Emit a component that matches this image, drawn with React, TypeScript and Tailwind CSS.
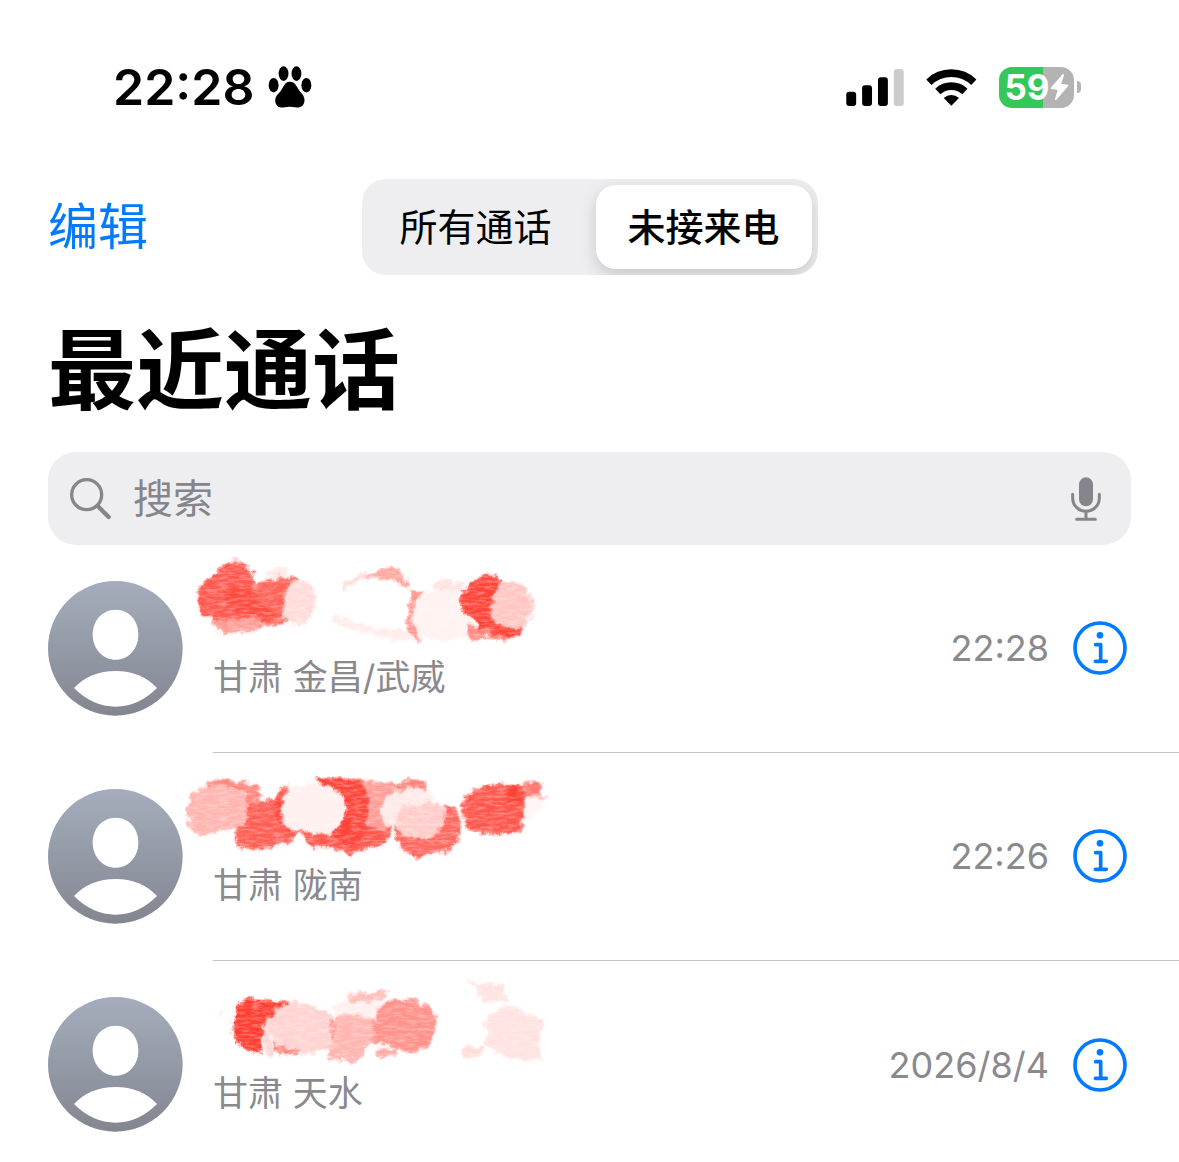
import React, { useState } from "react";

interface Blob {
	d: string;
	fill: string;
	opacity?: number;
}

interface Call {
	id: number;
	place: string;
	time: string;
	viewBox: string;
	blobs: Blob[];
}

const calls: Call[] = [
	{
		id: 1,
		place: "甘肃 金昌/武威",
		time: "22:28",
		viewBox: "423 12 1110 288",
		blobs: [
			{ d: "M505 185L530 240Q560 258 590 245Q640 252 680 225L740 215L650 170Z", fill: "#ff9d96" },
			{ d: "M675 80Q700 50 735 52Q750 65 745 85Z", fill: "#ffe9e7" },
			{ d: "M645 115Q665 82 700 86Q745 72 778 95L740 130L735 220Q690 238 645 200Z", fill: "#ff6359" },
			{ d: "M470 140Q475 95 515 88Q530 50 560 42Q585 20 607 42Q637 52 642 85L650 115L650 195Q610 215 570 203Q535 225 512 208Q478 185 470 140Z", fill: "#ff5a50" },
			{ d: "M545 120Q600 100 640 130L720 205Q680 225 640 195Q570 200 545 120Z", fill: "#ff4337", opacity: 0.6 },
			{ d: "M735 130Q745 92 785 90Q825 105 827 150Q825 200 795 222Q755 232 726 205Z", fill: "#ffdcd9" },
			{ d: "M875 205Q900 190 925 205Q985 240 1060 235Q1110 245 1130 270Q1060 278 1010 252Q950 248 880 222Z", fill: "#ffeceb" },
			{ d: "M905 130Q900 95 950 78Q990 65 1050 75L1050 90Q960 75 925 112Z", fill: "#ffdedb" },
			{ d: "M975 72Q1020 65 1050 50Q1090 55 1092 85Q1112 95 1108 120Q1070 80 975 77Z", fill: "#ffa7a1" },
			{ d: "M1180 100Q1215 75 1245 100Q1270 90 1280 120L1190 130Z", fill: "#ffe3e1" },
			{ d: "M1115 120L1152 122Q1120 165 1122 210L1142 272Q1120 270 1100 235Z", fill: "#ff958e" },
			{ d: "M1125 165Q1150 125 1200 120Q1270 110 1285 160L1300 250Q1220 285 1145 262Q1105 220 1125 165Z", fill: "#fff2f1" },
			{ d: "M1285 225L1390 230L1425 250L1400 272L1330 260L1290 275Z", fill: "#ff8880" },
			{ d: "M1262 150Q1278 88 1325 78Q1365 72 1385 92L1365 140L1375 215L1450 228Q1440 262 1400 262Q1360 245 1315 238L1310 215Q1268 200 1262 150Z", fill: "#ff4539" },
			{ d: "M1375 105Q1400 85 1440 98Q1478 120 1480 170Q1475 215 1435 235Q1390 240 1365 210Q1340 180 1360 148Z", fill: "#ffc6c2" },
		],
	},
	{
		id: 2,
		place: "甘肃 陇南",
		time: "22:26",
		viewBox: "423 -9 1110 288",
		blobs: [
			{ d: "M495 55Q550 32 590 50Q640 45 662 85L660 120L600 130Z", fill: "#ff8780" },
			{ d: "M440 130Q445 85 490 65Q560 50 605 80L635 130L605 195Q570 180 545 195Q510 220 470 210Q440 190 440 130Z", fill: "#ffb5b0" },
			{ d: "M622 130Q650 95 705 108Q715 70 745 60L780 200Q750 240 700 245Q640 258 592 245L585 195Q620 180 622 130Z", fill: "#ff5e54" },
			{ d: "M705 120L745 62L760 200L720 190Z", fill: "#ff493e" },
			{ d: "M775 190L860 190L1055 190Q1050 235 985 250Q950 250 928 270Q900 268 885 245L810 248Z", fill: "#ff594f" },
			{ d: "M825 38Q890 45 945 38Q985 45 988 90L985 190Q960 240 930 242Q875 235 880 200L900 130Z", fill: "#ff453a" },
			{ d: "M965 42Q1010 55 1060 52L1100 100L1055 190Q1010 200 975 185Q1000 100 965 42Z", fill: "#ff9d97" },
			{ d: "M725 105Q735 70 775 60Q845 42 895 78Q920 95 918 140Q900 200 860 210Q815 210 785 195Q735 195 725 165Z", fill: "#fff0ef" },
			{ d: "M1065 60Q1100 50 1120 38Q1162 38 1165 80L1180 110L1090 90Z", fill: "#ff8078" },
			{ d: "M1065 190L1170 190L1210 120Q1250 115 1260 150Q1270 205 1238 250Q1200 268 1170 262Q1130 290 1100 265Q1065 240 1065 190Z", fill: "#ff685f" },
			{ d: "M1022 140Q1025 95 1075 75Q1130 55 1172 85L1190 140L1070 190Q1025 185 1022 140Z", fill: "#ffeae8" },
			{ d: "M1070 155Q1085 115 1130 122Q1180 105 1215 125L1212 175L1190 210Q1150 230 1105 212Q1072 205 1070 155Z", fill: "#ffccc9" },
			{ d: "M1460 95L1505 90L1520 105L1480 160L1455 165Z", fill: "#fff5f4" },
			{ d: "M1267 120Q1275 75 1325 65Q1390 50 1450 65L1458 130L1440 200Q1360 215 1285 195L1272 160Z", fill: "#ff574c" },
			{ d: "M1395 80Q1410 55 1440 60L1465 80L1435 120L1400 125Z", fill: "#ff4236" },
			{ d: "M1438 60Q1470 45 1500 55L1505 90L1485 98L1460 92Z", fill: "#ff7970" },
			{ d: "M1475 92L1500 84L1524 102L1500 110Z", fill: "#ffc4c0" },
		],
	},
	{
		id: 3,
		place: "甘肃 天水",
		time: "2026/8/4",
		viewBox: "423 0 1110 288",
		blobs: [
			{ d: "M530 130L550 118L535 140Z", fill: "#ffe6e4" },
			{ d: "M580 150Q590 90 630 85Q690 90 748 92L740 125Q700 120 680 150L662 200L670 245Q620 250 590 215Q575 190 580 150Z", fill: "#ff3d31" },
			{ d: "M668 195L690 140L710 130L690 200L705 250L680 260Z", fill: "#ffd6d3" },
			{ d: "M870 105Q940 85 1030 92L1000 150L890 130Z", fill: "#fff0ef" },
			{ d: "M918 75Q980 70 1020 62L1052 66L1020 90L930 98Z", fill: "#ffbeb9" },
			{ d: "M865 150Q910 125 960 135L1000 150L1002 220Q975 235 955 275Q900 280 860 262Z", fill: "#ffb5b0" },
			{ d: "M700 215Q740 235 790 240L765 255L710 248Z", fill: "#ff8077" },
			{ d: "M690 145Q720 92 770 98Q850 105 880 140L882 215Q850 250 800 252Q760 235 715 228Q685 195 690 145Z", fill: "#ffd3d0" },
			{ d: "M874 140L885 160L882 215L874 205Z", fill: "#ff8a82" },
			{ d: "M1008 235L1080 238L1045 264L1012 255Z", fill: "#ffa8a2" },
			{ d: "M998 160Q1010 105 1060 88Q1120 80 1170 115Q1195 140 1188 165Q1185 220 1130 248Q1080 250 1050 225L1000 218Z", fill: "#ff928b" },
			{ d: "M1285 32Q1330 45 1385 42L1405 92L1330 95L1310 55Z", fill: "#ffe3e1" },
			{ d: "M1258 248L1290 228L1335 230L1325 248L1280 264Z", fill: "#ffdcd9" },
			{ d: "M1338 155Q1360 115 1410 108Q1450 120 1500 145Q1515 175 1495 215L1510 270Q1440 280 1370 245L1335 225Z", fill: "#ffe3e1" },
		],
	},
];

function Paw() {
	return (
		<svg viewBox="503 51 131 127" className="h-[42px] w-11" aria-hidden="true">
			<ellipse cx="519" cy="109" rx="15" ry="22" />
			<ellipse cx="549" cy="74" rx="15" ry="22" />
			<ellipse cx="588" cy="74" rx="15" ry="22" />
			<ellipse cx="618" cy="109" rx="15" ry="22" />
			<path d="M568 99C585 99 588 114 598 127C608 137 614 146 612 158C610 173 596 179 584 176Q568 172 552 176C540 179 526 174 524 158C522 146 530 137 540 127C550 114 552 99 568 99Z" />
		</svg>
	);
}

function Signal() {
	return (
		<svg viewBox="48 56 174 112" className="h-[37px] w-[58px]" aria-hidden="true">
			<rect x="48" y="125" width="30" height="43" rx="9" />
			<rect x="96" y="105" width="30" height="63" rx="9" />
			<rect x="144" y="81" width="30" height="87" rx="9" />
			<rect x="192" y="56" width="30" height="112" rx="9" fill="#cccccc" />
		</svg>
	);
}

function Wifi() {
	return (
		<svg viewBox="288 56 153 112" className="h-[37px] w-[51px]" aria-hidden="true">
			<path d="M296 96A98 98 0 0 1 432 96" fill="none" stroke="#000" strokeWidth="23" />
			<path d="M323 124A60 60 0 0 1 405 124" fill="none" stroke="#000" strokeWidth="23" />
			<path d="M341 144A34 34 0 0 1 387 144L364 167Z" />
		</svg>
	);
}

function Battery() {
	return (
		<div className="flex items-center gap-[3px]">
			<div className="flex h-[41px] w-[75px] items-center justify-center rounded-[13px] bg-[linear-gradient(to_right,#34c759_59%,#b3b3b3_59%)] text-white">
				<span className="text-[35px] leading-none font-bold">59</span>
				<svg viewBox="664 74 56 83" className="h-7 w-[19px]" aria-hidden="true">
					<path d="M703 79L668 119L690 122L681 152L716 111L694 108Z" fill="#fff" stroke="#fff" strokeWidth="5" strokeLinejoin="round" />
				</svg>
			</div>
			<div className="h-3 w-1 rounded-r-full bg-[#b3b3b3]"></div>
		</div>
	);
}

function Avatar() {
	return (
		<svg viewBox="24 93 405 405" className="h-[135px] w-[135px] shrink-0" aria-hidden="true">
			<circle cx="226" cy="295" r="202" fill="url(#avatar)" />
			<path d="M227 179C268 179 295 212 295 254C295 298 264 329 227 329C190 329 158 298 158 254C158 212 186 179 227 179Z" fill="#fff" />
			<path d="M102 414Q150 363 227 363Q303 363 351 414Q295 470 227 470Q158 470 102 414Z" fill="#fff" />
		</svg>
	);
}

function InfoIcon() {
	return (
		<svg viewBox="578 63 162 162" className="h-[54px] w-[54px]" fill="none" stroke="#007aff" strokeWidth="11" aria-hidden="true">
			<circle cx="659" cy="144" r="75" />
			<circle cx="659" cy="106" r="10" fill="#007aff" stroke="none" />
			<path d="M646 134H661V184M645 184H678" strokeLinecap="round" strokeLinejoin="round" />
		</svg>
	);
}

function CallRow({ call, last }: { call: Call; last: boolean }) {
	return (
		<li className="flex h-[208px] gap-[30px] pl-12">
			<div className="flex items-center pb-0.5">
				<Avatar />
			</div>
			<div className={`flex min-w-0 flex-1 items-center gap-6 pr-[52px] pb-px ${last ? "" : "border-b border-[#c6c6c8]"}`}>
				<div className="flex flex-1 flex-col self-start pt-[9px]">
					<svg viewBox={call.viewBox} className="-ml-8 h-24 w-[370px] overflow-visible" aria-hidden="true">
						<g filter="url(#rough)">
							{call.blobs.map((blob, i) => (
								<path key={i} d={blob.d} fill={blob.fill} opacity={blob.opacity} />
							))}
						</g>
					</svg>
					<p className="text-[35px] leading-[54px] whitespace-nowrap">{call.place}</p>
				</div>
				<time className="text-4xl whitespace-nowrap">{call.time}</time>
				<button type="button" aria-label="详细信息">
					<InfoIcon />
				</button>
			</div>
		</li>
	);
}

function App() {
	const [tab, setTab] = useState("missed");

	const activeTab = "h-[84px] w-[216px] rounded-[20px] bg-white font-medium shadow-[0_6px_16px_rgba(0,0,0,0.16)]";
	const plainTab = "h-[84px] w-[216px] rounded-[20px]";

	return (
		<div className="min-h-screen overflow-hidden bg-white font-['Inter','Noto_Sans_CJK_SC',sans-serif] text-black">
			<svg className="absolute h-0 w-0" aria-hidden="true">
				<defs>
					<linearGradient id="avatar" x1="0" y1="0" x2="0" y2="1">
						<stop offset="0" stopColor="#a5adbc" />
						<stop offset="1" stopColor="#828690" />
					</linearGradient>
					{/* torn edges and a bit of paper grain for the brush marks */}
					<filter id="rough" x="-5%" y="-10%" width="110%" height="120%" colorInterpolationFilters="sRGB">
						<feTurbulence type="fractalNoise" baseFrequency="0.04" numOctaves="4" seed="4" result="noise" />
						<feGaussianBlur in="SourceGraphic" stdDeviation="3" result="soft" />
						<feDisplacementMap in="soft" in2="noise" scale="30" xChannelSelector="R" yChannelSelector="G" result="torn" />
						<feTurbulence type="fractalNoise" baseFrequency="0.03 0.12" numOctaves="3" seed="9" />
						<feColorMatrix values="0 0 0 0 1  0 0 0 0 1  0 0 0 0 1  0.8 0 0 0 -0.32" result="grain" />
						<feComposite in="grain" in2="torn" operator="in" result="speckle" />
						<feMerge>
							<feMergeNode in="torn" />
							<feMergeNode in="speckle" />
						</feMerge>
					</filter>
				</defs>
			</svg>

			<div className="flex h-[174px] items-center justify-between pr-[98px] pl-[113px]">
				<div className="flex items-center gap-[14px]">
					<span className="text-[50px] leading-none font-semibold">22:28</span>
					<Paw />
				</div>
				<div className="flex items-center gap-[22px]">
					<Signal />
					<Wifi />
					<Battery />
				</div>
			</div>

			<header className="grid grid-cols-[1fr_auto_1fr] items-center px-12 pt-[5px]">
				<button type="button" className="justify-self-start text-[50px] leading-none text-[#007aff]">
					编辑
				</button>
				<div className="flex gap-3 overflow-hidden rounded-3xl bg-[#eeeef0] p-1.5 text-[38px] leading-none">
					<button type="button" className={tab === "all" ? activeTab : plainTab} onClick={() => setTab("all")}>
						所有通话
					</button>
					<button type="button" className={tab === "missed" ? activeTab : plainTab} onClick={() => setTab("missed")}>
						未接来电
					</button>
				</div>
			</header>

			<h1 className="mt-10 px-12 text-[88px] leading-[110px] font-bold">最近通话</h1>

			<div className="mx-12 mt-[27px] flex h-[93px] items-center rounded-[28px] bg-[#eeeef0] pr-[30px] pl-[22px]">
				<svg viewBox="92 96 123 123" className="h-[41px] w-[41px] overflow-visible" fill="none" stroke="#85858b" strokeLinecap="round" aria-hidden="true">
					<circle cx="142" cy="146" r="45" strokeWidth="10" />
					<path d="M176 181L208 213" strokeWidth="13" />
				</svg>
				<input
					type="text"
					aria-label="搜索"
					placeholder="搜索"
					className="ml-[22px] min-w-0 flex-1 bg-transparent text-[40px] outline-none placeholder:text-[#85858b]"
				/>
				<button type="button" aria-label="听写">
					<svg viewBox="92 96 90 132" className="h-11 w-[30px]" fill="none" stroke="#85858b" strokeWidth="9" strokeLinecap="round" aria-hidden="true">
						<rect x="116" y="97" width="42" height="87" rx="21" fill="#85858b" stroke="none" />
						<path d="M97 148V159A40 40 0 0 0 177 159V148M137 200V223M109 223H165" />
					</svg>
				</button>
			</div>

			<ul className="text-[#8a8a8e]">
				{calls.map((call, i) => (
					<CallRow key={call.id} call={call} last={i === calls.length - 1} />
				))}
			</ul>
		</div>
	);
}

export default App;
